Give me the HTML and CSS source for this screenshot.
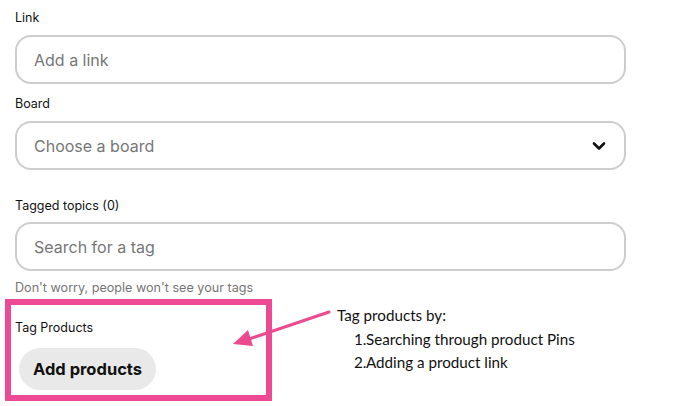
FILE: index.html
```html
<!DOCTYPE html>
<html>
<head>
<meta charset="utf-8">
<link rel="stylesheet" href="styles.css">
</head>
<body>
<div class="page">
  <form class="form">
    <div class="field">
      <label class="label">Link</label>
      <div class="input"><span class="placeholder">Add a link</span></div>
    </div>
    <div class="field field-board">
      <label class="label">Board</label>
      <div class="input select">
        <span class="placeholder">Choose a board</span>
        <svg class="chevron" width="14" height="10" viewBox="0 0 14 10"><path d="M2 2.5 L7 7.5 L12 2.5" fill="none" stroke="#111" stroke-width="2.6" stroke-linecap="round" stroke-linejoin="round"/></svg>
      </div>
    </div>
    <div class="field field-tags">
      <label class="label">Tagged topics (0)</label>
      <div class="input"><span class="placeholder">Search for a tag</span></div>
      <p class="helper">Don't worry, people won't see your tags</p>
    </div>
    <section class="products">
      <label class="label">Tag Products</label>
      <button type="button" class="btn">Add products</button>
    </section>
  </form>
  <svg class="arrow" width="110" height="45" viewBox="0 0 110 45">
    <line x1="99" y1="3" x2="16" y2="31" stroke="#ec4a8f" stroke-width="3" stroke-linecap="round"/>
    <path d="M3 35 L18 21 L23 37 Z" fill="#ec4a8f"/>
  </svg>
  <div class="note">
    <p class="note-title">Tag products by:</p>
    <ol class="note-list">
      <li>Searching through product Pins</li>
      <li>Adding a product link</li>
    </ol>
  </div>
</div>
</body>
</html>
```
FILE: styles.css
```css
* { box-sizing: border-box; }
html, body { margin: 0; padding: 0; background: #fff; }
body { font-family: Inter, "Liberation Sans", Arial, sans-serif; color: #111; }
.page { position: relative; width: 700px; height: 406px; padding: 10px 0 0 15px; overflow: hidden; }
.form { width: 611px; display: flex; flex-direction: column; }
.label { display: block; font-size: 12.5px; line-height: 16px; color: #111; }
.input {
  margin-top: 9px; height: 49px; border: 2px solid #cdcdcd; border-radius: 16px;
  display: flex; align-items: center; padding: 0 16px 0 17px;
}
.placeholder { font-size: 16px; color: #767676; }
.select { justify-content: space-between; }
.chevron { margin-right: 2px; }
.field-board { margin-top: 12px; }
.field-tags { margin-top: 28px; }
.field-tags .input { margin-top: 8px; }
.helper { margin: 9px 0 0 0; font-size: 12.6px; line-height: 16px; color: #767676; }
.products {
  margin: 3px 0 0 -10px; width: 267px; height: 102px;
  border: 6px solid #ec4a94; padding: 15px 0 0 4px;
}
.btn {
  margin-top: 12px; margin-left: 4px; height: 42px; padding: 0 14px;
  border: 0; border-radius: 21px; background: #e9e9e9;
  font-family: Inter, "Liberation Sans", Arial, sans-serif; font-weight: 700; font-size: 16.5px; color: #111;
}
.arrow { position: absolute; left: 230px; top: 309px; }
.note { position: absolute; left: 337px; top: 304px; font-family: Lato, "Open Sans", sans-serif; font-size: 15.2px; color: #111; }
.note-title { margin: 0; line-height: 22px; }
.note-list { margin: 2px 0 0 0; padding: 0; list-style: none; counter-reset: n; }
.note-list li { line-height: 23px; padding-left: 17px; counter-increment: n; }
.note-list li::before { content: counter(n) "."; display: inline-block; width: 11px; text-align: right; margin-right: 1px; }
```
